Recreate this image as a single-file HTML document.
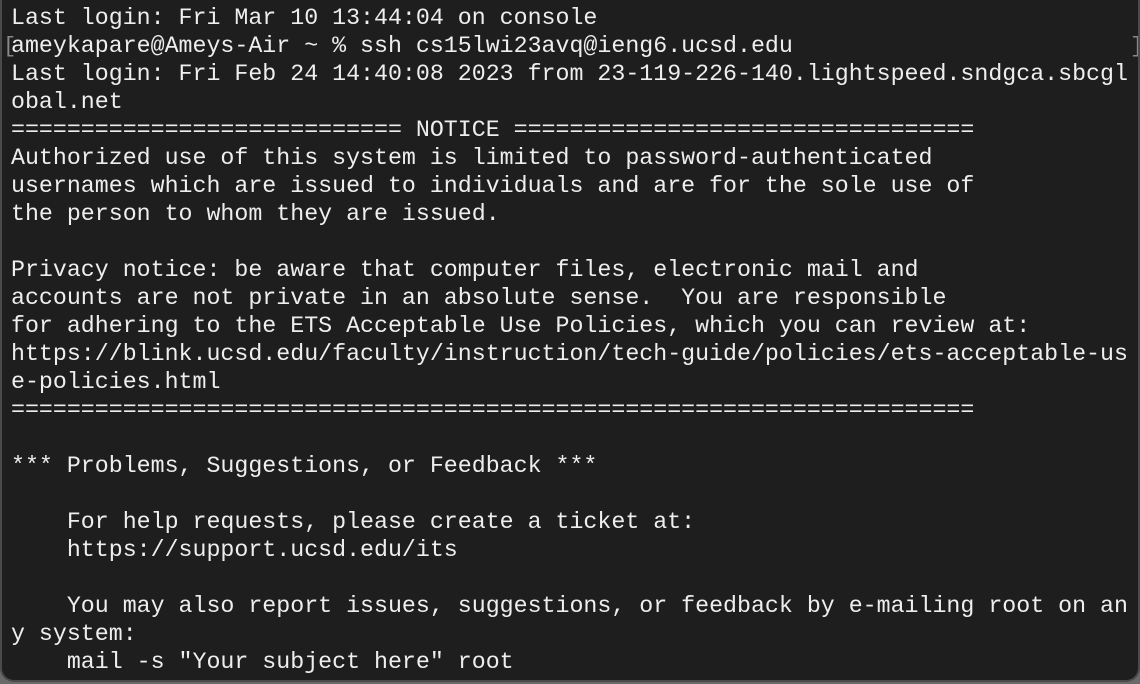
<!DOCTYPE html>
<html><head><meta charset="utf-8"><style>
html,body{margin:0;padding:0;background:#6a6a6a;}
.t{position:absolute;left:0;top:0;width:1136px;height:680px;background:#1e1e1e;border:2px solid #4a4a4a;border-top:none;border-radius:0 0 14px 14px;overflow:hidden;}
pre{margin:0;position:absolute;left:9px;top:4px;font-family:"Liberation Mono",monospace;font-size:23.27px;line-height:28px;color:#eeeeee;white-space:pre;}
.b{position:absolute;top:34px;font-family:"Liberation Mono",monospace;font-size:22px;color:#888;}
</style></head><body><div class="t">
<span class="b" style="left:1px">[</span><span class="b" style="left:1128px">]</span>
<pre>Last login: Fri Mar 10 13:44:04 on console
ameykapare@Ameys-Air ~ % ssh cs15lwi23avq@ieng6.ucsd.edu
Last login: Fri Feb 24 14:40:08 2023 from 23-119-226-140.lightspeed.sndgca.sbcgl
obal.net
============================ NOTICE =================================
Authorized use of this system is limited to password-authenticated
usernames which are issued to individuals and are for the sole use of
the person to whom they are issued.

Privacy notice: be aware that computer files, electronic mail and
accounts are not private in an absolute sense.  You are responsible
for adhering to the ETS Acceptable Use Policies, which you can review at:
https://blink.ucsd.edu/faculty/instruction/tech-guide/policies/ets-acceptable-us
e-policies.html
=====================================================================

*** Problems, Suggestions, or Feedback ***

    For help requests, please create a ticket at:
    https://support.ucsd.edu/its

    You may also report issues, suggestions, or feedback by e-mailing root on an
y system:
    mail -s "Your subject here" root</pre>
</div></body></html>
